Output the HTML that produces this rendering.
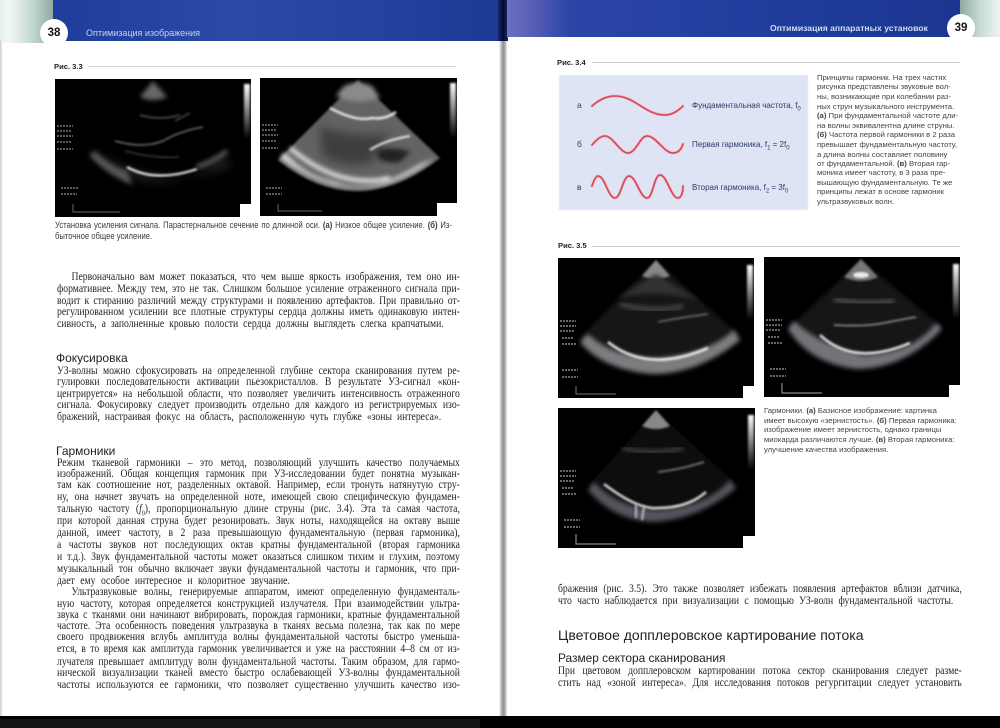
<!DOCTYPE html>
<html lang="ru">
<head>
<meta charset="utf-8">
<title>Оптимизация изображения</title>
<style>
html,body{margin:0;padding:0;background:#fff}
#p{position:relative;width:1000px;height:728px;overflow:hidden;background:#fff;font-family:"Liberation Serif","Noto Serif CJK SC",serif}
#p div{position:absolute}
.l{left:57px;width:474px;height:13px;overflow:hidden;line-height:12px;font-size:11.4px;color:#262626;text-align:justify;text-align-last:justify;transform:scaleX(.85);transform-origin:0 0;filter:blur(.35px)}
.r{left:558px;width:475px}
.i{text-indent:17px}
.h,.s,.c,.t{font-family:"Liberation Sans","Noto Sans CJK SC",sans-serif}
.h{color:#222;white-space:nowrap;filter:blur(.3px)}
.c{font-size:7.7px;line-height:10px;height:10px;color:#444;white-space:nowrap;filter:blur(.3px)}
.s{font-size:7.6px;font-weight:bold;color:#222;white-space:nowrap;line-height:10px;height:10px}
.u{background:#000}
.u svg{display:block}
.n{background:#fff}
.ln{height:1px;background:#d4d4d4}
</style>
</head>
<body>
<div id="p">

<!-- left header -->
<div style="left:52px;top:0;width:448px;height:41px;background:linear-gradient(90deg,#1f3d9a,#2a4aa6 40%,#23429e 75%,#1d3a94)"></div>
<div style="left:0;top:0;width:53px;height:43px;background:linear-gradient(90deg,#e6efec,#f1f7f5 18%,#c4d8d2 60%,#8fa9a2)"></div>
<div style="left:40px;top:19px;width:28px;height:28px;border-radius:50%;background:#fff"></div>
<div class="t" style="left:40px;top:26px;width:28px;text-align:center;font-size:11.5px;line-height:14px;font-weight:bold;color:#111">38</div>
<div class="t" style="left:86px;top:27px;font-size:9px;line-height:13px;color:#c5d2f2;white-space:nowrap;filter:blur(.3px)">Оптимизация изображения</div>

<!-- spine and right header -->
<div style="left:498px;top:0;width:10px;height:41px;background:linear-gradient(90deg,#16296e,#05082e 50%,#1a2a70)"></div>
<div style="left:507px;top:0;width:453px;height:37px;background:linear-gradient(90deg,#6d6fc0,#5a60b8 5%,#2b45a6 14%,#203d9c 60%,#1b3690)"></div>
<div style="left:960px;top:0;width:40px;height:37px;background:linear-gradient(90deg,#8fa9a2,#c8dbd5 50%,#eef5f3)"></div>
<div style="left:947px;top:14px;width:28px;height:28px;border-radius:50%;background:#fff"></div>
<div class="t" style="left:947px;top:21px;width:28px;text-align:center;font-size:11.5px;line-height:14px;font-weight:bold;color:#111">39</div>
<div class="t" style="left:770px;top:22px;font-size:8.65px;line-height:13px;font-weight:bold;color:#d3dcf4;white-space:nowrap;filter:blur(.25px)">Оптимизация аппаратных установок</div>

<div style="left:499px;top:41px;width:8px;height:675px;background:linear-gradient(90deg,#fff,#b4b4b8 30%,#8e8e92 60%,#e8e8e8)"></div>
<div style="left:0;top:40px;width:3px;height:676px;background:linear-gradient(90deg,#ccc,#fff)"></div>

<!-- bottom -->
<div style="left:0;top:716px;width:1000px;height:12px;background:#000"></div>
<div style="left:0;top:719px;width:480px;height:9px;background:#141414"></div>

<!-- shared filters -->
<svg width="0" height="0" style="position:absolute">
<defs>
<filter id="b1" x="-20%" y="-20%" width="140%" height="140%"><feGaussianBlur stdDeviation="1"/></filter>
<filter id="b2" x="-20%" y="-20%" width="140%" height="140%"><feGaussianBlur stdDeviation="2.5"/></filter>
<filter id="b3" x="-20%" y="-20%" width="140%" height="140%"><feGaussianBlur stdDeviation="5"/></filter>
<linearGradient id="sc" x1="0" y1="0" x2="0" y2="1"><stop offset="0" stop-color="#fff"/><stop offset="1" stop-color="#000"/></linearGradient>
</defs>
</svg>

<!-- Fig 3.3 -->
<div class="s" style="left:54px;top:62px">Рис. 3.3</div>
<div class="ln" style="left:88px;top:66px;width:368px"></div>

<div class="u" style="left:55px;top:79px;width:196px;height:138px">
<svg width="196" height="138" viewBox="0 0 196 138">
<path d="M98 2 L85 18 Q98 24 112 18Z" fill="#666" filter="url(#b2)"/>
<path d="M40 75 Q100 128 170 78 L176 86 Q100 118 30 66Z" fill="#3a3a3a" filter="url(#b3)" opacity=".7"/>
<path d="M40 72 Q58 88 72 92 L78 106 Q52 96 34 76Z" fill="#555" filter="url(#b2)"/>
<path d="M72 88 Q100 104 142 90" fill="none" stroke="#f2f2f2" stroke-width="2.2" filter="url(#b1)"/>
<path d="M142 88 Q160 82 172 72" fill="none" stroke="#555" stroke-width="5" filter="url(#b2)"/>
<path d="M85 36 Q105 42 125 36 M120 42 L135 34" fill="none" stroke="#666" stroke-width="1.2" filter="url(#b1)"/>
<path d="M60 62 Q88 70 108 62 Q125 52 148 48" fill="none" stroke="#888" stroke-width="1.3" filter="url(#b1)"/>
<path d="M70 72 Q100 80 124 78" fill="none" stroke="#444" stroke-width="1.3" filter="url(#b1)"/>
<rect x="189" y="5" width="6" height="55" fill="url(#sc)" filter="url(#b1)"/>
<path d="M2 47h16M2 52h14M2 57h16M2 63h14M2 70h16M6 109h18M6 115h16" stroke="#777" stroke-width="1.6" stroke-dasharray="2 1"/>
<path d="M18 125 V133 H65" fill="none" stroke="#666" stroke-width="1"/>
</svg></div>
<div class="n" style="left:240px;top:204px;width:11px;height:13px"></div>

<div class="u" style="left:260px;top:78px;width:197px;height:138px">
<svg width="197" height="138" viewBox="0 0 197 138">
<path d="M98 2 L18 82 Q96 145 180 80Z" fill="#646464" filter="url(#b1)"/>
<path d="M25 74 Q45 98 76 104 Q108 118 160 86 L175 80 Q98 140 20 80Z" fill="#d4d4d4" filter="url(#b2)"/>
<path d="M60 48 Q100 62 130 55 L112 84 Q88 92 62 78Z" fill="#3c3c3c" filter="url(#b3)"/>
<path d="M118 72 Q135 68 150 74 L140 84 Q125 86 118 80Z" fill="#222" filter="url(#b2)"/>
<path d="M70 30 Q96 44 112 40 Q125 42 136 34" fill="none" stroke="#ededed" stroke-width="2.4" filter="url(#b1)"/>
<path d="M110 72 Q125 62 150 58" fill="none" stroke="#eee" stroke-width="2" filter="url(#b1)"/>
<path d="M84 8 Q98 2 112 8 L120 20 Q96 28 76 18Z" fill="#8a8a8a" filter="url(#b2)"/>
<path d="M30 70 Q80 112 130 100" fill="none" stroke="#fff" stroke-width="3.5" filter="url(#b2)"/>
<rect x="190" y="5" width="6" height="55" fill="url(#sc)" filter="url(#b1)"/>
<path d="M2 47h16M2 52h14M2 57h16M2 63h14M2 70h16M6 110h16M6 116h16" stroke="#777" stroke-width="1.6" stroke-dasharray="2 1"/>
<path d="M18 126 V133 H62" fill="none" stroke="#666" stroke-width="1"/>
</svg></div>
<div class="n" style="left:437px;top:203px;width:20px;height:13px"></div>

<div class="c" style="left:55px;top:220px;width:467px;overflow:hidden;font-size:9px;color:#3c3c3c;white-space:normal;text-align:justify;text-align-last:justify;transform:scaleX(.85);transform-origin:0 0">Установка усиления сигнала. Парастернальное сечение по длинной оси. <b>(а)</b> Низкое общее усиление. <b>(б)</b> Из-</div>
<div class="c" style="left:55px;top:231px;font-size:9px;color:#3c3c3c;transform:scaleX(.85);transform-origin:0 0">быточное общее усиление.</div>

<!-- Left body -->
<div class="l i" style="top:271px">Первоначально вам может показаться, что чем выше яркость изображения, тем оно ин-</div>
<div class="l" style="top:283px">формативнее. Между тем, это не так. Слишком большое усиление отраженного сигнала при-</div>
<div class="l" style="top:295px">водит к стиранию различий между структурами и появлению артефактов. При правильно от-</div>
<div class="l" style="top:306px">регулированном усилении все плотные структуры сердца должны иметь одинаковую интен-</div>
<div class="l" style="top:318px;width:455px">сивность, а заполненные кровью полости сердца должны выглядеть слегка крапчатыми.</div>

<div class="h" style="left:56px;top:351px;font-size:12px;line-height:15px">Фокусировка</div>
<div class="l" style="top:365px">УЗ-волны можно сфокусировать на определенной глубине сектора сканирования путем ре-</div>
<div class="l" style="top:376px">гулировки последовательности активации пьезокристаллов. В результате УЗ-сигнал «кон-</div>
<div class="l" style="top:388px">центрируется» на небольшой области, что позволяет увеличить интенсивность отраженного</div>
<div class="l" style="top:399px">сигнала. Фокусировку следует производить отдельно для каждого из регистрируемых изо-</div>
<div class="l" style="top:411px;width:452px">бражений, настраивая фокус на область, расположенную чуть глубже «зоны интереса».</div>

<div class="h" style="left:56px;top:444px;font-size:12px;line-height:15px">Гармоники</div>
<div class="l" style="top:457px">Режим тканевой гармоники – это метод, позволяющий улучшить качество получаемых</div>
<div class="l" style="top:468px">изображений. Общая концепция гармоник при УЗ-исследовании будет понятна музыкан-</div>
<div class="l" style="top:479px">там как соотношение нот, разделенных октавой. Например, если тронуть натянутую стру-</div>
<div class="l" style="top:491px">ну, она начнет звучать на определенной ноте, имеющей свою специфическую фундамен-</div>
<div class="l" style="top:503px">тальную частоту (<i>f</i><sub style="font-size:7px;line-height:0">0</sub>), пропорциональную длине струны (рис. 3.4). Эта та самая частота,</div>
<div class="l" style="top:515px">при которой данная струна будет резонировать. Звук ноты, находящейся на октаву выше</div>
<div class="l" style="top:527px">данной, имеет частоту, в 2 раза превышающую фундаментальную (первая гармоника),</div>
<div class="l" style="top:539px">а частоты звуков нот последующих октав кратны фундаментальной (вторая гармоника</div>
<div class="l" style="top:551px">и т.д.). Звук фундаментальной частоты может оказаться слишком тихим и глухим, поэтому</div>
<div class="l" style="top:563px">музыкальный тон обычно включает звуки фундаментальной частоты и гармоник, что при-</div>
<div class="l" style="top:575px;width:274px">дает ему особое интересное и колоритное звучание.</div>
<div class="l i" style="top:586px">Ультразвуковые волны, генерируемые аппаратом, имеют определенную фундаменталь-</div>
<div class="l" style="top:598px">ную частоту, которая определяется конструкцией излучателя. При взаимодействии ультра-</div>
<div class="l" style="top:609px">звука с тканями они начинают вибрировать, порождая гармоники, кратные фундаментальной</div>
<div class="l" style="top:620px">частоте. Эта особенность поведения ультразвука в тканях весьма полезна, так как по мере</div>
<div class="l" style="top:631px">своего продвижения вглубь амплитуда волны фундаментальной частоты быстро уменьша-</div>
<div class="l" style="top:643px">ется, в то время как амплитуда гармоник увеличивается и уже на расстоянии 4–8 см от из-</div>
<div class="l" style="top:656px">лучателя превышает амплитуду волн фундаментальной частоты. Таким образом, для гармо-</div>
<div class="l" style="top:667px">нической визуализации тканей вместо быстро ослабевающей УЗ-волны фундаментальной</div>
<div class="l" style="top:679px">частоты используются ее гармоники, что позволяет существенно улучшить качество изо-</div>

<!-- Fig 3.4 -->
<div class="s" style="left:557px;top:58px">Рис. 3.4</div>
<div class="ln" style="left:592px;top:62px;width:368px;background:#c8c8c8"></div>
<div style="left:559px;top:75px;width:249px;height:135px;background:#dfe4f5;filter:blur(.6px)"></div>
<svg style="position:absolute;left:559px;top:75px" width="249" height="135" viewBox="559 75 249 135">
<g fill="none" stroke-linecap="round">
<path d="M592 106 C600 99 608 96 615 96 C635 96 645 115 665 115 C672 115 678 111 683 106" stroke="#f0b4bc" stroke-width="3"/>
<path d="M592 106 C600 99 608 96 615 96 C635 96 645 115 665 115 C672 115 678 111 683 106" stroke="#d2455c" stroke-width="1.5"/>
<path d="M592 145 C597 139 601 136 605 136 C613 136 620 153 628 153 C636 153 640 136 647 136 C656 136 664 153 673 153 C678 153 681 150 683 144" stroke="#f0b4bc" stroke-width="3"/>
<path d="M592 145 C597 139 601 136 605 136 C613 136 620 153 628 153 C636 153 640 136 647 136 C656 136 664 153 673 153 C678 153 681 150 683 144" stroke="#d2455c" stroke-width="1.5"/>
<path d="M592 186 C594 180 596 176 598 176 C605 176 608 198 615 198 C621 198 623 176 629 176 C636 176 640 198 647 198 C653 198 654 175 660 175 C667 175 671 198 678 198 C681 198 683 193 683 186" stroke="#f0b4bc" stroke-width="3"/>
<path d="M592 186 C594 180 596 176 598 176 C605 176 608 198 615 198 C621 198 623 176 629 176 C636 176 640 198 647 198 C653 198 654 175 660 175 C667 175 671 198 678 198 C681 198 683 193 683 186" stroke="#d2455c" stroke-width="1.5"/>
</g>
</svg>
<div class="t" style="left:577px;top:100px;font-size:8.5px;line-height:11px;color:#2b3a6c">а</div>
<div class="t" style="left:577px;top:139px;font-size:8.5px;line-height:11px;color:#2b3a6c">б</div>
<div class="t" style="left:577px;top:182px;font-size:8.5px;line-height:11px;color:#2b3a6c">в</div>
<div class="t" style="left:692px;top:100px;font-size:8px;line-height:11px;color:#2b3a6c;white-space:nowrap">Фундаментальная частота, f<sub style="font-size:6px;line-height:0">0</sub></div>
<div class="t" style="left:692px;top:139px;font-size:8px;line-height:11px;color:#2b3a6c;white-space:nowrap">Первая гармоника, f<sub style="font-size:6px;line-height:0">1</sub> = 2f<sub style="font-size:6px;line-height:0">0</sub></div>
<div class="t" style="left:692px;top:182px;font-size:8px;line-height:11px;color:#2b3a6c;white-space:nowrap">Вторая гармоника, f<sub style="font-size:6px;line-height:0">2</sub> = 3f<sub style="font-size:6px;line-height:0">0</sub></div>

<div class="c" style="left:817px;top:73px">Принципы гармоник. На трех частях</div>
<div class="c" style="left:817px;top:82px">рисунка представлены звуковые вол-</div>
<div class="c" style="left:817px;top:92px">ны, возникающие при колебании раз-</div>
<div class="c" style="left:817px;top:102px">ных струн музыкального инструмента.</div>
<div class="c" style="left:817px;top:111px"><b>(а)</b> При фундаментальной частоте дли-</div>
<div class="c" style="left:817px;top:121px">на волны эквивалентна длине струны.</div>
<div class="c" style="left:817px;top:130px"><b>(б)</b> Частота первой гармоники в 2 раза</div>
<div class="c" style="left:817px;top:140px">превышает фундаментальную частоту,</div>
<div class="c" style="left:817px;top:150px">а длина волны составляет половину</div>
<div class="c" style="left:817px;top:159px">от фундаментальной. <b>(в)</b> Вторая гар-</div>
<div class="c" style="left:817px;top:168px">моника имеет частоту, в 3 раза пре-</div>
<div class="c" style="left:817px;top:178px">вышающую фундаментальную. Те же</div>
<div class="c" style="left:817px;top:187px">принципы лежат в основе гармоник</div>
<div class="c" style="left:817px;top:197px">ультразвуковых волн.</div>

<!-- Fig 3.5 -->
<div class="s" style="left:558px;top:241px">Рис. 3.5</div>
<div class="ln" style="left:592px;top:246px;width:368px;background:#c8c8c8"></div>

<div class="u" style="left:558px;top:258px;width:196px;height:140px">
<svg width="196" height="140" viewBox="0 0 196 140">
<path d="M98 3 L22 80 Q96 140 180 76Z" fill="#161616" filter="url(#b2)"/>
<path d="M98 2 L84 18 Q98 24 112 18Z" fill="#888" filter="url(#b1)"/>
<path d="M98 16 L60 40 Q98 30 140 42Z" fill="#333" filter="url(#b2)"/>
<path d="M30 76 Q55 100 100 100 Q150 96 176 72 L182 82 Q140 116 95 116 Q45 112 22 84Z" fill="#7f7b80" filter="url(#b2)"/>
<path d="M50 84 Q90 116 150 90" fill="none" stroke="#eee" stroke-width="2.6" filter="url(#b1)"/>
<path d="M62 46 Q96 56 125 48" fill="none" stroke="#444" stroke-width="5" filter="url(#b2)"/>
<path d="M100 64 Q120 60 150 56" fill="none" stroke="#777" stroke-width="1.4" filter="url(#b1)"/>
<rect x="189" y="7" width="6" height="55" fill="url(#sc)" filter="url(#b1)"/>
<path d="M2 63h16M2 68h16M2 73h14M4 80h12M4 86h14M4 112h16M4 119h16" stroke="#888" stroke-width="1.6" stroke-dasharray="2 1"/>
<path d="M18 128 V136 H58" fill="none" stroke="#777" stroke-width="1"/>
</svg></div>
<div class="n" style="left:743px;top:386px;width:11px;height:12px"></div>

<div class="u" style="left:764px;top:257px;width:196px;height:140px">
<svg width="196" height="140" viewBox="0 0 196 140">
<path d="M97 3 L24 72 Q96 130 178 70Z" fill="#141414" filter="url(#b2)"/>
<path d="M97 2 L80 20 Q97 28 114 20Z" fill="#777" filter="url(#b1)"/>
<ellipse cx="97" cy="18" rx="8" ry="3" fill="#eee" filter="url(#b1)"/>
<path d="M30 64 Q55 88 100 98 Q150 96 172 66 L178 72 Q140 112 92 112 Q45 106 24 72Z" fill="#76727a" filter="url(#b2)"/>
<path d="M56 78 Q90 110 146 86" fill="none" stroke="#eee" stroke-width="2.4" filter="url(#b1)"/>
<path d="M70 42 Q96 48 130 44" fill="none" stroke="#555" stroke-width="4" filter="url(#b2)"/>
<path d="M70 68 Q100 70 120 66 Q140 62 152 60" fill="none" stroke="#999" stroke-width="1.6" filter="url(#b1)"/>
<rect x="189" y="7" width="6" height="55" fill="url(#sc)" filter="url(#b1)"/>
<path d="M2 63h16M2 68h16M2 73h14M4 80h12M4 86h14M6 112h16M6 119h16" stroke="#888" stroke-width="1.6" stroke-dasharray="2 1"/>
<path d="M18 126 V136 H58" fill="none" stroke="#888" stroke-width="1.2"/>
</svg></div>
<div class="n" style="left:949px;top:385px;width:11px;height:12px"></div>

<div class="u" style="left:558px;top:408px;width:197px;height:140px">
<svg width="197" height="140" viewBox="0 0 197 140">
<path d="M98 3 L30 78 Q96 130 178 76Z" fill="#111" filter="url(#b2)"/>
<path d="M98 2 L84 18 Q98 24 112 18Z" fill="#888" filter="url(#b1)"/>
<path d="M36 74 Q60 100 100 102 Q150 98 172 72 L178 80 Q140 112 95 114 Q55 112 30 82Z" fill="#55525c" filter="url(#b2)"/>
<path d="M46 76 Q80 102 100 100 Q130 100 148 84" fill="none" stroke="#f4f4f4" stroke-width="2.2" filter="url(#b1)"/>
<path d="M78 96 L78 110 M86 98 L84 112" stroke="#bbb" stroke-width="2.2" filter="url(#b1)"/>
<path d="M65 40 Q96 48 125 40" fill="none" stroke="#444" stroke-width="4" filter="url(#b2)"/>
<path d="M100 64 Q120 62 146 54" fill="none" stroke="#888" stroke-width="1.6" filter="url(#b1)"/>
<rect x="190" y="7" width="6" height="55" fill="url(#sc)" filter="url(#b1)"/>
<path d="M2 63h16M2 68h16M2 73h14M4 80h12M4 86h14M6 112h16M6 119h16" stroke="#888" stroke-width="1.6" stroke-dasharray="2 1"/>
<path d="M18 126 V136 H58" fill="none" stroke="#888" stroke-width="1.2"/>
</svg></div>
<div class="n" style="left:743px;top:536px;width:12px;height:12px"></div>

<div class="c" style="left:764px;top:406px">Гармоники. <b>(а)</b> Базисное изображение: картинка</div>
<div class="c" style="left:764px;top:416px">имеет высокую «зернистость». <b>(б)</b> Первая гармоника:</div>
<div class="c" style="left:764px;top:425px">изображение имеет зернистость, однако границы</div>
<div class="c" style="left:764px;top:435px">миокарда различаются лучше. <b>(в)</b> Вторая гармоника:</div>
<div class="c" style="left:764px;top:445px">улучшение качества изображения.</div>

<!-- Right body -->
<div class="l r" style="top:583px">бражения (рис. 3.5). Это также позволяет избежать появления артефактов вблизи датчика,</div>
<div class="l r" style="top:595px;width:465px">что часто наблюдается при визуализации с помощью УЗ-волн фундаментальной частоты.</div>
<div class="h" style="left:558px;top:627px;font-size:14px;line-height:16px">Цветовое допплеровское картирование потока</div>
<div class="h" style="left:558px;top:651px;font-size:11.9px;line-height:14px">Размер сектора сканирования</div>
<div class="l r" style="top:665px">При цветовом допплеровском картировании потока сектор сканирования следует разме-</div>
<div class="l r" style="top:677px">стить над «зоной интереса». Для исследования потоков регургитации следует установить</div>

</div>
</body>
</html>
